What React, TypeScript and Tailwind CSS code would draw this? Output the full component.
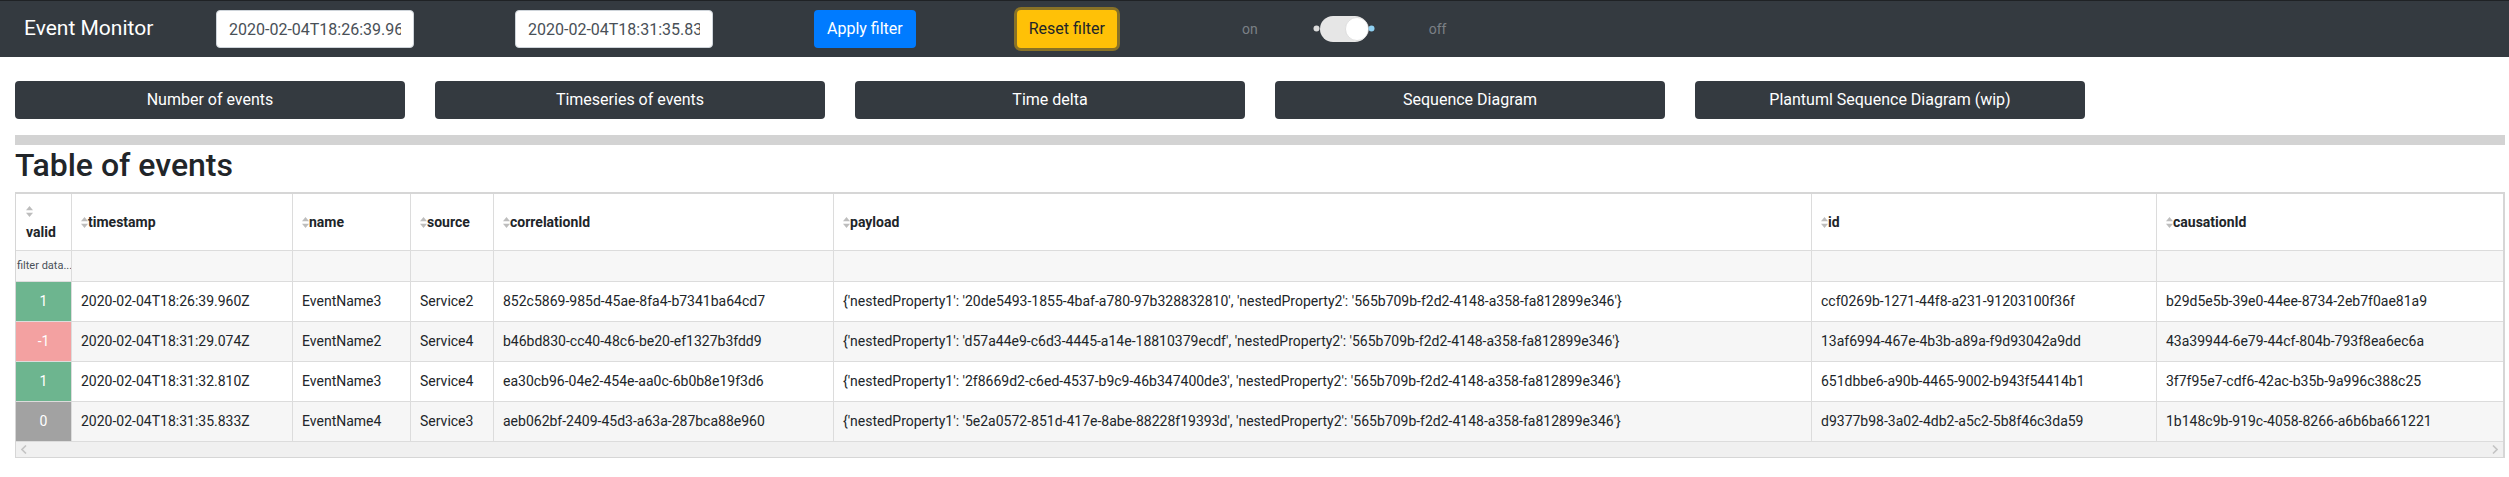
import React from 'react';

type Row = {
  valid: number;
  timestamp: string;
  name: string;
  source: string;
  correlationId: string;
  payload: string;
  id: string;
  causationId: string;
};

const rows: Row[] = [
  {
    valid: 1,
    timestamp: '2020-02-04T18:26:39.960Z',
    name: 'EventName3',
    source: 'Service2',
    correlationId: '852c5869-985d-45ae-8fa4-b7341ba64cd7',
    payload:
      "{'nestedProperty1': '20de5493-1855-4baf-a780-97b328832810', 'nestedProperty2': '565b709b-f2d2-4148-a358-fa812899e346'}",
    id: 'ccf0269b-1271-44f8-a231-91203100f36f',
    causationId: 'b29d5e5b-39e0-44ee-8734-2eb7f0ae81a9',
  },
  {
    valid: -1,
    timestamp: '2020-02-04T18:31:29.074Z',
    name: 'EventName2',
    source: 'Service4',
    correlationId: 'b46bd830-cc40-48c6-be20-ef1327b3fdd9',
    payload:
      "{'nestedProperty1': 'd57a44e9-c6d3-4445-a14e-18810379ecdf', 'nestedProperty2': '565b709b-f2d2-4148-a358-fa812899e346'}",
    id: '13af6994-467e-4b3b-a89a-f9d93042a9dd',
    causationId: '43a39944-6e79-44cf-804b-793f8ea6ec6a',
  },
  {
    valid: 1,
    timestamp: '2020-02-04T18:31:32.810Z',
    name: 'EventName3',
    source: 'Service4',
    correlationId: 'ea30cb96-04e2-454e-aa0c-6b0b8e19f3d6',
    payload:
      "{'nestedProperty1': '2f8669d2-c6ed-4537-b9c9-46b347400de3', 'nestedProperty2': '565b709b-f2d2-4148-a358-fa812899e346'}",
    id: '651dbbe6-a90b-4465-9002-b943f54414b1',
    causationId: '3f7f95e7-cdf6-42ac-b35b-9a996c388c25',
  },
  {
    valid: 0,
    timestamp: '2020-02-04T18:31:35.833Z',
    name: 'EventName4',
    source: 'Service3',
    correlationId: 'aeb062bf-2409-45d3-a63a-287bca88e960',
    payload:
      "{'nestedProperty1': '5e2a0572-851d-417e-8abe-88228f19393d', 'nestedProperty2': '565b709b-f2d2-4148-a358-fa812899e346'}",
    id: 'd9377b98-3a02-4db2-a5c2-5b8f46c3da59',
    causationId: '1b148c9b-919c-4058-8266-a6b6ba661221',
  },
];

const columns = ['timestamp', 'name', 'source', 'correlationId', 'payload', 'id', 'causationId'] as const;

const validColor: Record<string, string> = {
  '1': 'bg-[#6db58f]',
  '-1': 'bg-[#f3a1a1]',
  '0': 'bg-[#a2a2a2]',
};

function SortCaret() {
  return (
    <svg width="7" height="11" viewBox="0 0 7 11" className="inline-block shrink-0">
      <path d="M3.5 0L7 4.2H0z" fill="#bdbdbd" />
      <path d="M3.5 11L0 6.8h7z" fill="#bdbdbd" />
    </svg>
  );
}

function Toggle() {
  return (
    <svg width="62" height="30" viewBox="0 0 62 30">
      <circle cx="3.5" cy="14.5" r="3" fill="#dcdcdc" />
      <rect x="7" y="2" width="48" height="26" rx="13" fill="#e6e6e6" />
      <circle cx="44" cy="15" r="11.5" fill="#ffffff" stroke="#d0d0d0" strokeWidth="0.6" />
      <circle cx="58.5" cy="14.5" r="3" fill="#8fd0f2" />
    </svg>
  );
}

export default function App() {
  return (
    <div className="w-full min-h-[477px] bg-white font-['Roboto','Liberation_Sans',sans-serif] text-[#212529]">
      {/* Navbar */}
      <nav className="h-[57px] bg-[#343a40] border-t border-[#1f2225] flex items-center pl-[24px]">
        <span className="w-[192px] text-[21px] text-white">Event Monitor</span>
        <input
          readOnly
          value="2020-02-04T18:26:39.960Z"
          className="w-[198px] h-[38px] rounded-[4px] border border-[#ced4da] bg-white px-[12px] text-[16px] text-[#495057] outline-none"
        />
        <input
          readOnly
          value="2020-02-04T18:31:35.833Z"
          className="ml-[101px] w-[198px] h-[38px] rounded-[4px] border border-[#ced4da] bg-white px-[12px] text-[16px] text-[#495057] outline-none"
        />
        <button className="ml-[101px] h-[38px] px-[13px] rounded-[4px] bg-[#007bff] text-white text-[16px]">
          Apply filter
        </button>
        <button className="ml-[101px] h-[38px] px-[12px] rounded-[4px] bg-[#ffc107] text-[#212529] text-[16px] shadow-[0_0_0_3px_rgba(222,170,12,0.5)]">
          Reset filter
        </button>
        <span className="ml-[125px] text-[14px] text-[#7b8086]">on</span>
        <span className="ml-[55px] flex items-center">
          <Toggle />
        </span>
        <span className="ml-[54px] text-[14px] text-[#7b8086]">off</span>
      </nav>

      <div className="pl-[15px] pr-[4px]">
        {/* Chart buttons */}
        <div className="mt-[24px] flex gap-[30px]">
          {['Number of events', 'Timeseries of events', 'Time delta', 'Sequence Diagram', 'Plantuml Sequence Diagram (wip)'].map(
            (label) => (
              <button
                key={label}
                className="w-[390px] h-[38px] rounded-[4px] bg-[#343a40] text-white text-[16px]"
              >
                {label}
              </button>
            )
          )}
        </div>

        <div className="mt-[16px] h-[10px] bg-[#d3d3d3]" />

        <h2 className="mt-[1px] mb-[8px] h-[38px] leading-[38px] text-[32px] font-medium">Table of events</h2>

        {/* Table */}
        <div className="w-[2490px] border-l border-b border-t-2 border-r-2 border-[#d6d6d6] text-[14px]">
          <div className="grid grid-cols-[56px_221px_118px_83px_340px_978px_345px_346px]">
            {/* header */}
            <div className="h-[57px] border-r border-b border-[#dcdcdc] pl-[10px] flex flex-col justify-center leading-[21px] font-bold">
              <span className="flex h-[21px] items-center">
                <SortCaret />
              </span>
              <span>valid</span>
            </div>
            {columns.map((c, i) => (
              <div
                key={c}
                className={
                  'h-[57px] border-b border-[#dcdcdc] pl-[9px] flex items-center font-bold ' +
                  (i < columns.length - 1 ? 'border-r' : '')
                }
              >
                <SortCaret />
                <span>{c}</span>
              </div>
            ))}

            {/* filter row */}
            <div className="h-[31px] bg-[#f7f7f7] border-r border-b border-[#dcdcdc] flex items-center overflow-hidden pl-[1px]">
              <span className="text-[11px] text-[#495057] whitespace-nowrap">filter data...</span>
            </div>
            {columns.map((c, i) => (
              <div
                key={'f-' + c}
                className={'h-[31px] bg-[#f7f7f7] border-b border-[#dcdcdc] ' + (i < columns.length - 1 ? 'border-r' : '')}
              />
            ))}

            {/* data rows */}
            {rows.map((r, ri) => {
              const bg = ri % 2 === 1 ? 'bg-[#f6f6f6]' : 'bg-white';
              return (
                <React.Fragment key={r.id}>
                  <div
                    className={
                      'h-[40px] border-r border-b border-[#dcdcdc] flex items-center justify-center text-white ' +
                      validColor[String(r.valid)]
                    }
                  >
                    {r.valid}
                  </div>
                  {columns.map((c, i) => (
                    <div
                      key={c}
                      className={
                        'h-[40px] border-b border-[#dcdcdc] pl-[9px] flex items-center whitespace-nowrap overflow-hidden ' +
                        bg +
                        ' ' +
                        (i < columns.length - 1 ? 'border-r' : '')
                      }
                    >
                      {r[c]}
                    </div>
                  ))}
                </React.Fragment>
              );
            })}
          </div>

          {/* horizontal scrollbar */}
          <div className="h-[15px] bg-[#f0f0f0] flex items-center justify-between px-[5px]">
            <svg width="6" height="9" viewBox="0 0 6 9">
              <path d="M5 0.5L1 4.5l4 4" stroke="#c4c4c4" strokeWidth="1.6" fill="none" />
            </svg>
            <svg width="6" height="9" viewBox="0 0 6 9">
              <path d="M1 0.5l4 4-4 4" stroke="#c4c4c4" strokeWidth="1.6" fill="none" />
            </svg>
          </div>
        </div>
      </div>
    </div>
  );
}
